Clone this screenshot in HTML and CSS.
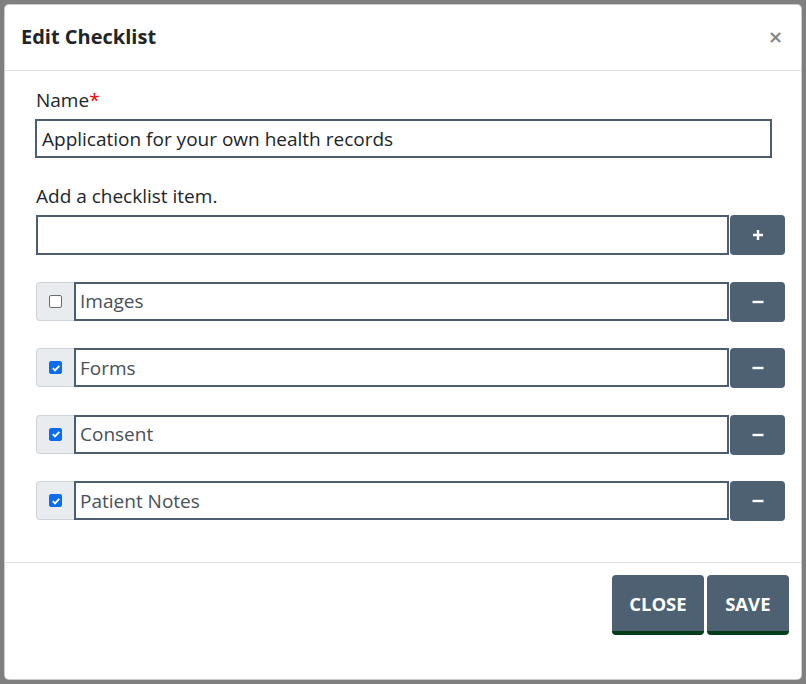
FILE: index.html
```html
<!DOCTYPE html>
<html>
<head>
<meta charset="utf-8">
<link rel="stylesheet" href="styles.css">
</head>
<body>
<div class="backdrop">
  <div class="modal">
    <div class="modal-header">
      <h5 class="modal-title">Edit Checklist</h5>
      <button class="close" type="button">&times;</button>
    </div>
    <div class="modal-body">
      <label class="label">Name<span class="req">*</span></label>
      <input class="name-input" type="text" value="Application for your own health records">
      <label class="label label-add">Add a checklist item.</label>
      <div class="row">
        <input class="field" type="text" value="">
        <button class="btn-icon" type="button">
          <svg width="12" height="12" viewBox="0 0 12 12"><path d="M6 1v10M1 6h10" stroke="#fff" stroke-width="2.4"/></svg>
        </button>
      </div>
      <div class="items">
        <div class="row">
          <div class="prepend"><span class="cb"></span></div>
          <input class="field" type="text" value="Images">
          <button class="btn-icon" type="button"><svg width="12" height="12" viewBox="0 0 12 12"><path d="M0.5 6h11" stroke="#fff" stroke-width="2.4"/></svg></button>
        </div>
        <div class="row">
          <div class="prepend"><span class="cb checked"><svg width="10" height="10" viewBox="0 0 10 10"><path d="M1.8 5.2l2.2 2.2 4.3-4.6" fill="none" stroke="#fff" stroke-width="1.9"/></svg></span></div>
          <input class="field" type="text" value="Forms">
          <button class="btn-icon" type="button"><svg width="12" height="12" viewBox="0 0 12 12"><path d="M0.5 6h11" stroke="#fff" stroke-width="2.4"/></svg></button>
        </div>
        <div class="row">
          <div class="prepend"><span class="cb checked"><svg width="10" height="10" viewBox="0 0 10 10"><path d="M1.8 5.2l2.2 2.2 4.3-4.6" fill="none" stroke="#fff" stroke-width="1.9"/></svg></span></div>
          <input class="field" type="text" value="Consent">
          <button class="btn-icon" type="button"><svg width="12" height="12" viewBox="0 0 12 12"><path d="M0.5 6h11" stroke="#fff" stroke-width="2.4"/></svg></button>
        </div>
        <div class="row">
          <div class="prepend"><span class="cb checked"><svg width="10" height="10" viewBox="0 0 10 10"><path d="M1.8 5.2l2.2 2.2 4.3-4.6" fill="none" stroke="#fff" stroke-width="1.9"/></svg></span></div>
          <input class="field" type="text" value="Patient Notes">
          <button class="btn-icon" type="button"><svg width="12" height="12" viewBox="0 0 12 12"><path d="M0.5 6h11" stroke="#fff" stroke-width="2.4"/></svg></button>
        </div>
      </div>
    </div>
    <div class="modal-footer">
      <button class="btn btn-close" type="button">CLOSE</button>
      <button class="btn btn-save" type="button">SAVE</button>
    </div>
  </div>
</div>
</body>
</html>
```
FILE: styles.css
```css
* { box-sizing: border-box; }
html, body { margin: 0; padding: 0; }
body {
  background: #7f7f7f;
  font-family: "Open Sans", "Noto Sans", sans-serif;
  color: #212529;
  width: 806px;
  height: 684px;
  overflow: hidden;
}
.backdrop {
  padding: 4px 4px 0 4px;
}
.modal {
  width: 798px;
  height: 676px;
  background: #fff;
  border: 1px solid rgba(0,0,0,0.2);
  border-radius: 5px;
  display: flex;
  flex-direction: column;
}
.modal-header {
  height: 66px;
  border-bottom: 1px solid #dee2e6;
  display: flex;
  align-items: center;
  justify-content: space-between;
  padding: 0 18px 2px 16px;
}
.modal-title {
  margin: 0;
  font-size: 20px;
  font-weight: 700;
  color: #212529;
}
.close {
  border: 0;
  background: none;
  padding: 0;
  font-family: "DejaVu Sans", sans-serif;
  font-size: 18px;
  font-weight: 700;
  color: #858585;
  line-height: 1;
  margin-top: 0;
}
.modal-body {
  flex: 1;
  padding: 16px 16px 0 31px;
  display: flex;
  flex-direction: column;
}
.label {
  display: block;
  font-size: 19px;
  line-height: 26px;
  color: #212529;
}
.req { color: #e00; }
.name-input {
  margin-top: 6px;
  width: 737px;
  margin-left: -1px;
  height: 39px;
  border: 2px solid #4b5d6e;
  padding: 0 5px;
  font-family: inherit;
  font-size: 19px;
  color: #212529;
  outline: none;
}
.label-add { margin-top: 25px; }
.row {
  display: flex;
  height: 40px;
  margin-top: 6px;
}
.field {
  flex: 1;
  height: 40px;
  border: 2px solid #4b5d6e;
  padding: 0 4px;
  font-family: inherit;
  font-size: 19px;
  color: #495057;
  outline: none;
  min-width: 0;
}
.items .row .field { height: 39px; margin-top: 0; }
.btn-icon {
  width: 55px;
  height: 40px;
  margin-left: 1px;
  background: #4d6173;
  border: 0;
  border-radius: 4px;
  display: flex;
  align-items: center;
  justify-content: center;
  padding: 0;
}
.items { display: flex; flex-direction: column; }
.items .row { margin-top: 26.5px; }
.prepend {
  width: 38px;
  height: 39px;
  background: #e9ecef;
  border: 1px solid #ced4da;
  border-right: 0;
  border-radius: 4px 0 0 4px;
  display: flex;
  align-items: center;
  justify-content: center;
}
.cb {
  width: 13px;
  height: 13px;
  border: 1px solid #6c6c6c;
  border-radius: 2px;
  background: #fff;
  display: flex;
  align-items: center;
  justify-content: center;
}
.cb.checked {
  background: #0b6cf0;
  border-color: #0b6cf0;
}
.modal-footer {
  height: 117px;
  border-top: 1px solid #dee2e6;
  display: flex;
  justify-content: flex-end;
  align-items: flex-start;
  gap: 3px;
  padding: 12px 12px 0 0;
}
.btn {
  height: 60px;
  background: #4d6173;
  color: #fff;
  border: 0;
  border-bottom: 4px solid #033d1c;
  border-radius: 4px;
  font-family: inherit;
  font-size: 18.5px;
  font-weight: 700;
  padding: 0 18px;
}
.btn-close { padding: 0 17px; }
.btn-save { padding: 0 18.5px; }
```
